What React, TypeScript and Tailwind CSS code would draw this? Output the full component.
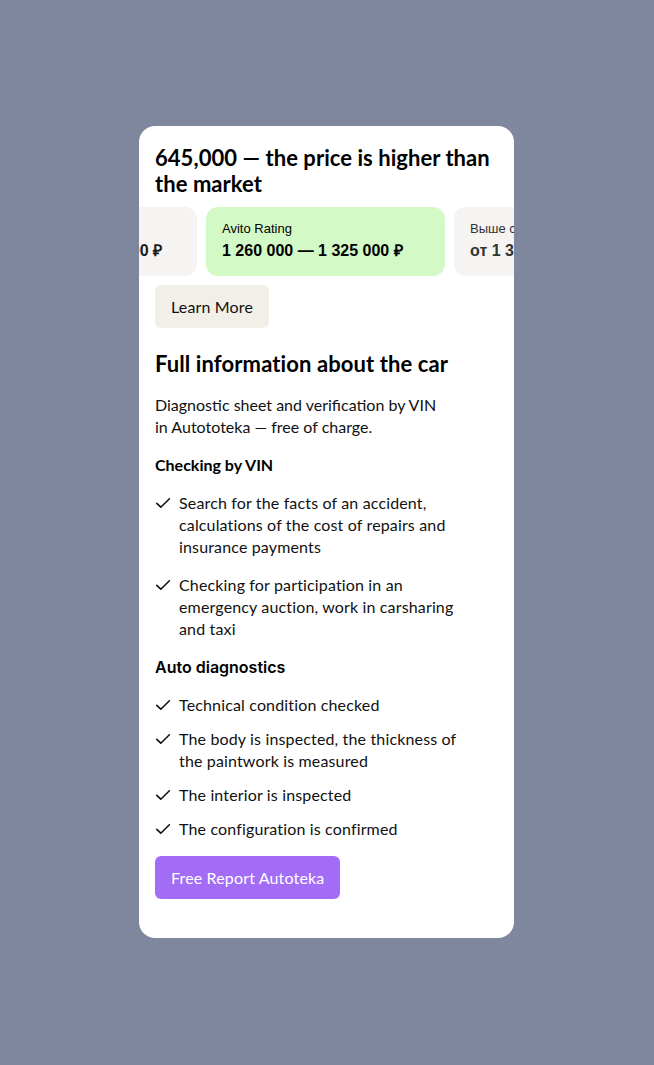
import React from 'react';

const lato = { fontFamily: 'Lato, "Noto Sans", sans-serif' };

function Tick() {
  return (
    <svg viewBox="0 0 16 16" className="w-4 h-4 mt-[3px] shrink-0" fill="none">
      <path d="M1.8 8.4l4 3.8L14.4 3.8" stroke="#111" strokeWidth="1.6" strokeLinecap="round" strokeLinejoin="round" />
    </svg>
  );
}

function Item({ children }: { children: React.ReactNode }) {
  return (
    <li className="flex gap-[8px] max-w-[318px]">
      <Tick />
      <span className="text-[16px] leading-[22px] text-[#111] tracking-[0.15px]">{children}</span>
    </li>
  );
}

export default function App() {
  return (
    <div className="min-h-[1065px] w-full bg-[#7f879f] pl-[139px] pt-[126px]" style={lato}>
      <div className="w-[375px] h-[812px] bg-white rounded-2xl overflow-hidden pt-[19px] pb-[39px]">
        <h2 className="px-4 text-[22px] leading-[26px] font-bold text-black tracking-[0.05px]">
          645,000 — the price is higher than the market
        </h2>

        <div className="mt-[10px] overflow-hidden">
          <div className="flex gap-[9px] ml-[-102px]" style={{ fontFamily: '"Liberation Sans", Arial, sans-serif' }}>
            <div className="w-[160px] shrink-0 h-[69px] rounded-xl bg-[#f5f4f3] pl-4 pt-[14px] text-[#1a1a1a]">
              <div className="text-[13px] leading-4">Ниже рынка</div>
              <div className="mt-1 text-[16px] leading-5 font-bold">до 1 200 000 ₽</div>
            </div>
            <div className="w-[239px] shrink-0 h-[69px] rounded-xl bg-[#d3fac6] pl-4 pt-[14px] text-black">
              <div className="text-[13px] leading-4">Avito Rating</div>
              <div className="mt-1 text-[16px] leading-5 font-bold">1 260 000 — 1 325 000 ₽</div>
            </div>
            <div className="w-[200px] shrink-0 h-[69px] rounded-xl bg-[#f5f4f3] pl-4 pt-[14px] text-[#333]">
              <div className="text-[13px] leading-4 whitespace-nowrap">Выше средней</div>
              <div className="mt-1 text-[16px] leading-5 font-bold whitespace-nowrap">от 1 330 000 ₽</div>
            </div>
          </div>
        </div>

        <div className="px-4">
          <button className="mt-[9px] h-[43px] px-4 rounded-md bg-[#f2efe9] text-[16px] text-[#111] tracking-[0.15px]">
            Learn More
          </button>

          <h3 className="mt-[23px] text-[22px] leading-[26px] font-bold text-black tracking-[0.1px]">
            Full information about the car
          </h3>
          <p className="mt-[17px] text-[16px] leading-[22px] text-[#111]">
            Diagnostic sheet and verification by VIN
            <br />
            in Autototeka — free of charge.
          </p>

          <h4 className="mt-4 text-[16px] leading-[22px] font-bold text-black">Checking by VIN</h4>
          <ul className="mt-4 flex flex-col gap-4">
            <Item>Search for the facts of an accident, calculations of the cost of repairs and insurance payments</Item>
            <Item>Checking for participation in an emergency auction, work in carsharing and taxi</Item>
          </ul>

          <h4
            className="mt-4 text-[16px] leading-[22px] font-semibold text-black"
            style={{ fontFamily: 'Inter, "Noto Sans", sans-serif' }}
          >
            Auto diagnostics
          </h4>
          <ul className="mt-4 flex flex-col gap-3">
            <Item>Technical condition checked</Item>
            <Item>The body is inspected, the thickness of the paintwork is measured</Item>
            <Item>The interior is inspected</Item>
            <Item>The configuration is confirmed</Item>
          </ul>

          <button className="mt-4 h-[43px] px-4 rounded-md bg-[#a36cf6] text-[16px] text-white tracking-[0.15px]">
            Free Report Autoteka
          </button>
        </div>
      </div>
    </div>
  );
}
